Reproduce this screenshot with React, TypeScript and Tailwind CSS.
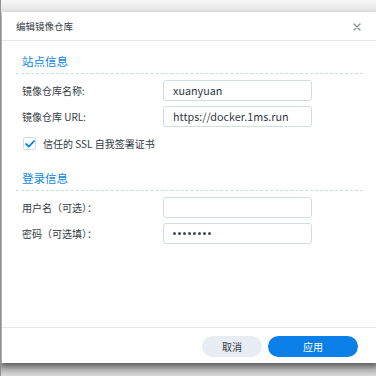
import React from "react";

const font = { fontFamily: '"Noto Sans CJK SC","Noto Sans",sans-serif' };

function Row({ label, children }: { label: string; children: React.ReactNode }) {
  return (
    <div className="flex items-center h-[21px]">
      <div className="w-[147px] pl-[6px] text-[10px] text-[#333a44] leading-none">{label}</div>
      {children}
    </div>
  );
}

function Input({ value, password }: { value?: string; password?: boolean }) {
  return (
    <div className="w-[149px] h-[21px] border border-[#d3dbe5] rounded-[3px] flex items-center pl-[9px] text-[10.8px] text-[#333a44] leading-none">
      {password ? (
        <div className="flex gap-[1.6px]">
          {Array.from({ length: 8 }).map((_, i) => (
            <span key={i} className="w-[3.4px] h-[3.4px] rounded-full bg-[#414b57]" />
          ))}
        </div>
      ) : (
        value
      )}
    </div>
  );
}

function Section({ title, h }: { title: string; h: string }) {
  return (
    <div className={`${h} flex items-end pb-[5px] border-b border-dashed border-[#cfdbe6]`}>
      <span className="pl-[6px] text-[11.5px] leading-[14px] text-[#0c86e3]">{title}</span>
    </div>
  );
}

export default function App() {
  return (
    <div className="w-[376px] h-[376px] overflow-hidden relative bg-[#d6d6d6] border-l border-[#8f8f8f]" style={font}>
      <div className="h-[12px] bg-gradient-to-b from-[#f7f7f7] to-[#e4e4e4]" />
      <div className="absolute left-0 right-0 bottom-0 h-[13px] bg-gradient-to-b from-[#959595] to-[#dadada]" />
      <div className="relative ml-[1px] w-[375px] h-[351px] bg-white flex flex-col shadow-[0_3px_6px_rgba(0,0,0,0.4)]">
        <div className="h-[29px] border-b border-[#e2e6ea] flex items-center justify-between pl-[14px] pr-[16px]">
          <span className="text-[9.5px] text-[#333a44] leading-none pt-[2px]">编辑镜像仓库</span>
          <svg width="8" height="8" viewBox="0 0 8 8" className="mt-[1px]">
            <path d="M1 1L7 7M7 1L1 7" stroke="#8a9099" strokeWidth="1.4" strokeLinecap="round" />
          </svg>
        </div>
        <div className="flex-1 px-[14px]">
          <Section title="站点信息" h="h-[33px]" />
          <div className="mt-[6px] flex flex-col gap-[5px]">
            <Row label="镜像仓库名称:">
              <Input value="xuanyuan" />
            </Row>
            <Row label="镜像仓库 URL:">
              <Input value="https://docker.1ms.run" />
            </Row>
          </div>
          <div className="mt-[10px] flex items-center h-[13px] pl-[7px]">
            <div className="w-[13px] h-[13px] border border-[#d3dbe5] rounded-[2px] flex items-center justify-center">
              <svg width="10" height="8" viewBox="0 0 10 8">
                <path d="M1 4L3.8 6.6L9 1.2" stroke="#0c86e3" strokeWidth="1.8" fill="none" strokeLinecap="round" strokeLinejoin="round" />
              </svg>
            </div>
            <span className="ml-[7px] text-[10px] text-[#333a44] leading-none">信任的 SSL 自我签署证书</span>
          </div>
          <Section title="登录信息" h="h-[41px]" />
          <div className="mt-[6px] flex flex-col gap-[5px]">
            <Row label="用户名（可选）：">
              <Input />
            </Row>
            <Row label="密码（可选填）：">
              <Input password />
            </Row>
          </div>
        </div>
        <div className="h-[36px] border-t border-[#e2e6ea] flex justify-end items-start pt-[8px] pr-[19px] gap-[6px]">
          <button className="w-[60px] h-[21px] rounded-full bg-[#e8edf3] text-[10px] text-[#333a44] leading-none">取消</button>
          <button className="w-[90px] h-[21px] rounded-full bg-[#0b7fe8] text-[10px] text-white leading-none">应用</button>
        </div>
      </div>
    </div>
  );
}
